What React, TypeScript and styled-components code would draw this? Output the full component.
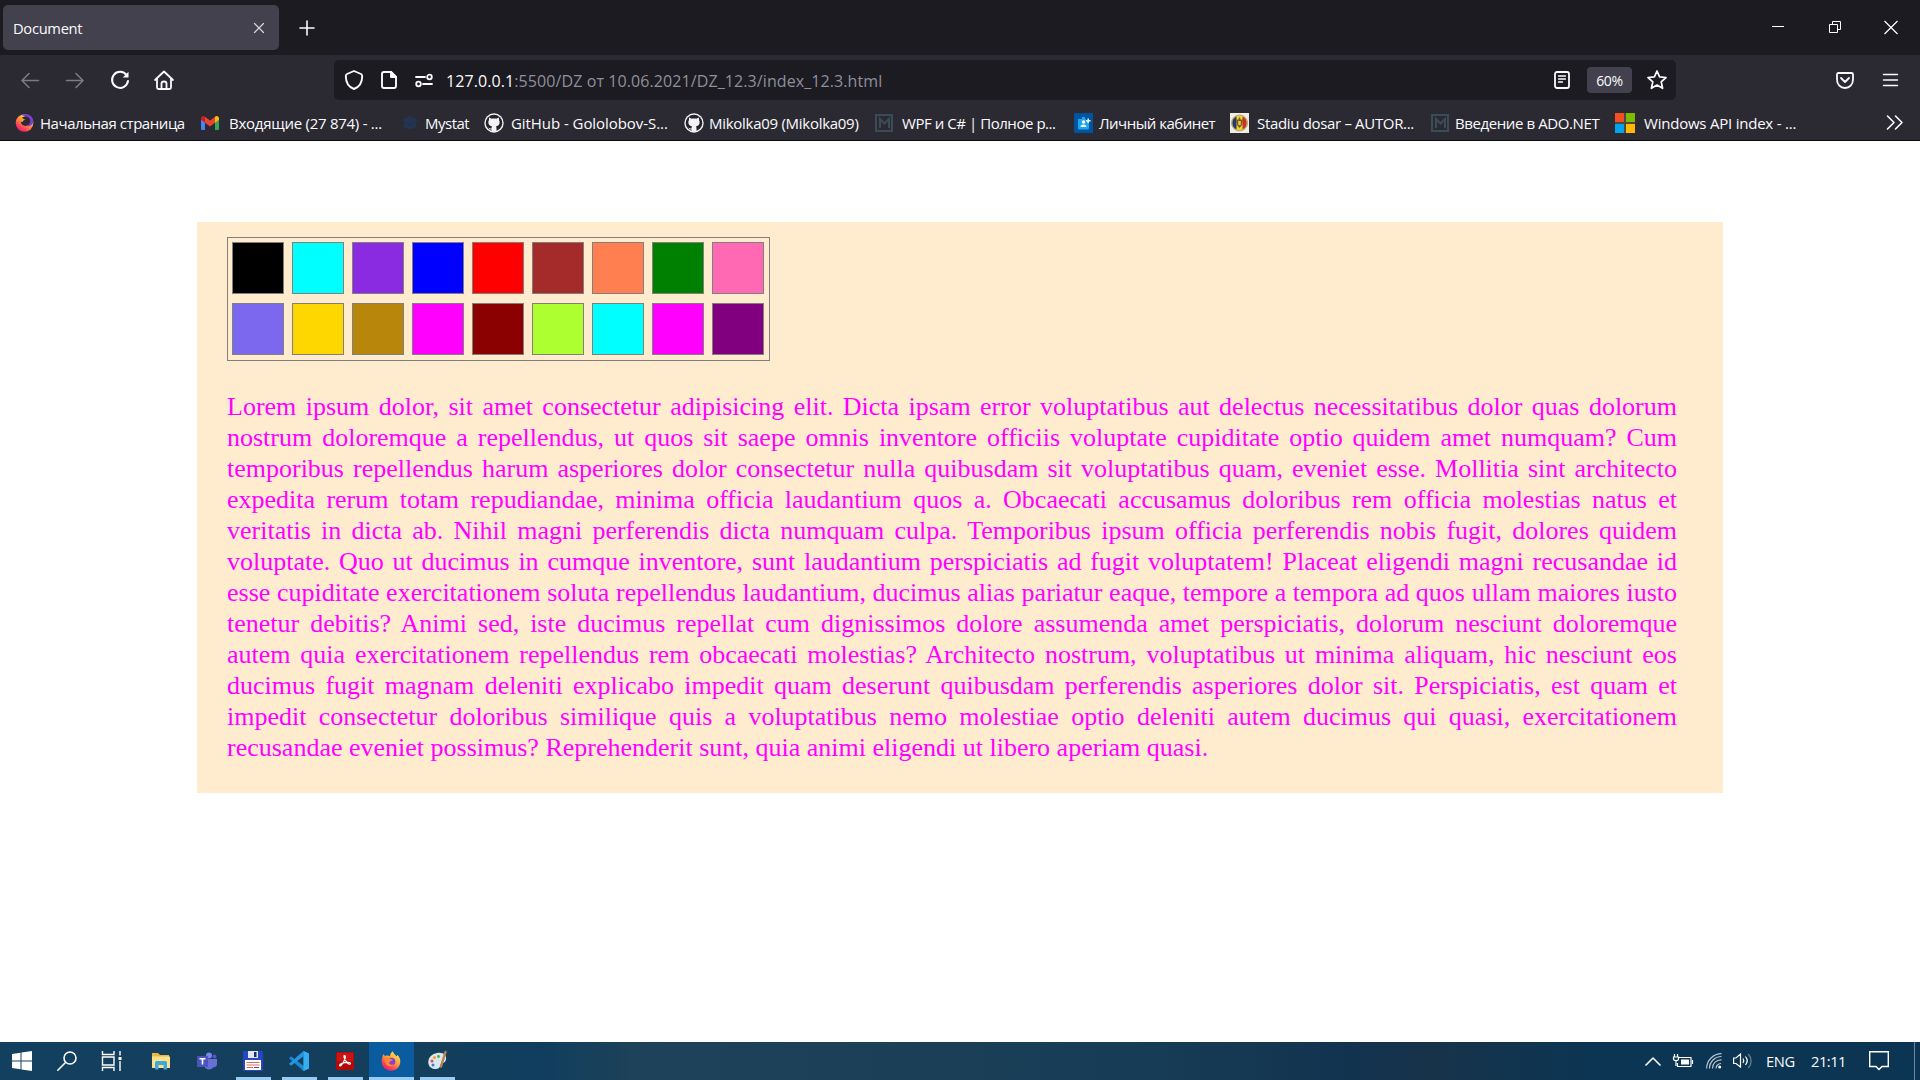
import React from "react";
import styled, { createGlobalStyle } from "styled-components";

const Global = createGlobalStyle`
  * { box-sizing: border-box; }
  body { margin: 0; background: #fff; overflow: hidden; }
  svg { display: block; flex: none; }
`;

const Screen = styled.div`
  width: 1920px;
  height: 1080px;
  display: flex;
  flex-direction: column;
  font-family: "Open Sans", "Noto Sans", sans-serif;
  font-size: 15px;
  color: #fbfbfe;
`;

const Icon = styled.svg<{ $ml?: number; $mt?: number }>`
  margin-left: ${(p) => p.$ml ?? 0}px;
  margin-top: ${(p) => p.$mt ?? 0}px;
  overflow: visible;
`;

const Label = styled.span<{ $ls?: number; $size?: number; $ml?: number; $w?: number }>`
  flex: none;
  white-space: pre;
  font-size: ${(p) => p.$size ?? 15}px;
  letter-spacing: ${(p) => p.$ls ?? 0}px;
  margin-left: ${(p) => p.$ml ?? 0}px;
  width: ${(p) => (p.$w ? p.$w + "px" : "auto")};
`;

const TabBar = styled.header`
  height: 55px;
  flex: none;
  background: #1c1b22;
  display: flex;
  align-items: center;
`;

const Tab = styled.div`
  width: 276px;
  height: 45px;
  margin-left: 3px;
  padding: 0 14px 0 10px;
  border-radius: 5px;
  background: #42414d;
  display: flex;
  align-items: center;
  justify-content: space-between;
  ${Label} { padding-top: 1px; }
`;

const WindowButtons = styled.div`
  margin-left: auto;
  display: flex;
  align-items: center;
  gap: 44px;
  padding-right: 22px;
`;

const Toolbar = styled.div`
  height: 50px;
  flex: none;
  background: #2b2a33;
  display: flex;
  align-items: center;
`;

const NavButtons = styled.nav`
  width: 334px;
  padding-left: 20px;
  display: flex;
  align-items: center;
  gap: 25px;
`;

const UrlBar = styled.div`
  width: 1342px;
  height: 40px;
  border-radius: 5px;
  background: #1c1b22;
  display: flex;
  align-items: center;
`;

const Url = styled.span`
  margin-left: 13px;
  padding-top: 2px;
  font-size: 16px;
  letter-spacing: 0.09px;
  white-space: pre;
  color: #8f8f9a;
  b { font-weight: 400; color: #fbfbfe; }
`;

const Zoom = styled.div`
  width: 45px;
  height: 26px;
  margin-left: 17px;
  border-radius: 4px;
  background: #42414d;
  font-size: 14px;
  letter-spacing: -0.3px;
  padding-top: 1px;
  display: flex;
  align-items: center;
  justify-content: center;
`;

const UrlActions = styled.div`
  margin-left: auto;
  display: flex;
  align-items: center;
  padding-right: 9px;
`;

const Menu = styled.div`
  margin-left: auto;
  padding-right: 22px;
  display: flex;
  align-items: center;
  gap: 29px;
`;

const Bookmarks = styled.div`
  height: 36px;
  flex: none;
  background: #2b2a33;
  border-bottom: 1px solid #0c0c0d;
  display: flex;
  align-items: center;
  padding: 0 16px 0 15px;
  justify-content: space-between;
`;

const BookmarkList = styled.div`
  display: flex;
  align-items: center;
`;

const Bookmark = styled.div<{ $w: number; $gap: number }>`
  width: ${(p) => p.$w}px;
  height: 24px;
  display: flex;
  align-items: center;
  gap: ${(p) => p.$gap}px;
  flex: none;
`;

const Page = styled.main`
  flex: 1;
  background: #fff;
  padding: 81px 197px 0;
`;

const Article = styled.section`
  width: 1526px;
  height: 571px;
  background: #ffebcd;
  padding: 15px 46px 30px 30px;
`;

const Palette = styled.div`
  width: 543px;
  height: 124px;
  border: 1px solid #808080;
  padding: 4px;
  display: grid;
  grid-template-columns: repeat(9, 52px);
  grid-auto-rows: 52px;
  gap: 9px 8px;
`;

const Swatch = styled.div<{ $color: string }>`
  border: 1px solid #808080;
  background: ${(p) => p.$color};
`;

const Text = styled.p`
  margin: 30px 0 0;
  font-family: "Liberation Serif", "Times New Roman", serif;
  font-size: 26px;
  line-height: 31px;
  color: #ff00ff;
  text-align: justify;
`;

const Taskbar = styled.footer`
  height: 38px;
  flex: none;
  background: linear-gradient(90deg, #14405f 0, #133e5c 440px, #103d5e 540px, #1d4259 630px, #1b4057 850px, #173c56 1150px, #12334f 1350px, #17334a 1430px, #0b3553 1600px, #0b3552 1920px);
  display: flex;
  justify-content: space-between;
`;

const Apps = styled.div`
  display: flex;
`;

const TaskButton = styled.div<{ $w?: number; $active?: boolean; $open?: boolean }>`
  width: ${(p) => p.$w ?? 46}px;
  height: 38px;
  margin-right: ${(p) => (p.$active ? 1 : 0)}px;
  display: flex;
  align-items: center;
  justify-content: center;
  background: ${(p) => (p.$active ? "#0b5c9e" : "transparent")};
  background-image: ${(p) =>
    p.$open || p.$active ? "linear-gradient(#9acbf3, #9acbf3)" : "none"};
  background-repeat: no-repeat;
  background-position: ${(p) => (p.$active ? 0 : 5)}px bottom;
  background-size: ${(p) => (p.$active ? "45px" : "35px")} 3px;
`;

const Tray = styled.div`
  display: flex;
  align-items: center;
  width: 275px;
`;

const ShowDesktop = styled.div`
  margin-left: auto;
  width: 6px;
  height: 38px;
  border-left: 1px solid #6d8798;
`;

const Firefox = ({ size = 20, home = false, ml = 0 }: { size?: number; home?: boolean; ml?: number }) => (
  <Icon $ml={ml} width={size} height={size} viewBox="0 0 20 20">
    <defs>
      <linearGradient id="ffBody" x1="0.8" y1="0.1" x2="0.25" y2="0.95">
        <stop offset="0" stopColor="#ffe14a" />
        <stop offset="0.45" stopColor="#ff9640" />
        <stop offset="0.8" stopColor="#ff3d57" />
        <stop offset="1" stopColor="#e3207d" />
      </linearGradient>
    </defs>
    {home ? (
      <>
        <circle cx="10" cy="10.5" r="9.3" fill="url(#ffBody)" />
        <path d="M7 2.2C11-.7 19.5 1.500 19.300 10C17.500 13.500 15 14 12.500 14.200C16 11 15 4.500 7 2.200Z" fill="#7a3fd0" />
        <circle cx="11" cy="8.600" r="5" fill="#2b2a33" />
        <path d="M5.500 6C7 4.700 8.500 5 9 6.200L11 7C9 7.500 8.500 8 8 9.500L5.500 9Z" fill="#ff9d3c" />
      </>
    ) : (
      <>
        <path d="M2.500 3C3 4.200 3.600 4.700 4.500 5C6 4.200 7.800 4.500 9 5.500C9 3.300 10 1.400 12 .3C12.300 2.500 14 3.500 15.500 5.200L16.500 4C18.500 6 19.500 8.500 19.300 11C19 16 15 19.700 10 19.700C5 19.700 .7 16 .7 10.800C.7 7.500 1.500 5 2.500 3Z" fill="url(#ffBody)" />
        <circle cx="10.500" cy="10.500" r="3.800" fill="#7b45d6" />
        <path d="M3.500 7.500C5.500 6 8 6.500 9.300 8L12 8.500C11 10 9.500 9.500 8.500 11C7.500 12.500 9.500 14.500 12.500 13.300C10 17 4.500 15 4.500 11Z" fill="#ff8a2e" />
      </>
    )}
  </Icon>
);

const Gmail = () => (
  <Icon width="18" height="14" viewBox="0 0 18 14">
    <path d="M0 2V12.700C0 13.400.6 14 1.300 14H4V6Z" fill="#4285f4" />
    <path d="M18 2V12.700C18 13.400 17.400 14 16.700 14H14V6Z" fill="#34a853" />
    <path d="M0 2.500C0 .2 2.300-.6 4 .7V6.700L0 3.700Z" fill="#c5221f" />
    <path d="M18 2.500C18 .2 15.700-.6 14 .7V6.700L18 3.700Z" fill="#fbbc04" />
    <path d="M4 .7L9 4.500L14 .7V6.700L9 10.500L4 6.700Z" fill="#ea4335" />
  </Icon>
);

const Mystat = () => (
  <Icon width="18" height="16" viewBox="0 0 18 16">
    <path d="M9 1L18 5L9 10L0 5ZM3 7L9 10.500L15 7V12C12 15 6 15 3 12Z" fill="#22344f" />
  </Icon>
);

const GitHub = () => (
  <Icon width="20" height="20" viewBox="0 0 20 20">
    <circle cx="10" cy="10" r="9.700" fill="#f4f4f6" />
    <circle cx="10" cy="10" r="8.300" fill="#24232b" />
    <path d="M5.200 4.500L7.700 5.700C9 5.300 11 5.300 12.300 5.700L14.800 4.500C15.200 5.500 15.100 6.400 14.900 7C16.500 9 15.600 13 11.900 13.400C12.400 14 12.500 14.700 12.500 15.500V18.500H7.500V16.500C5.500 16.800 5 15.500 4.300 14.700C5.700 14.500 5.800 16 7.500 15.500C7.500 14.500 7.700 13.900 8.100 13.400C4.400 13 3.500 9 5.100 7C4.900 6.400 4.800 5.500 5.200 4.500Z" fill="#f4f4f6" />
  </Icon>
);

const Metanit = () => (
  <Icon width="18" height="18" viewBox="0 0 18 18" fill="none" stroke="#3d4b59">
    <rect x="1" y="1" width="16" height="16" strokeWidth="2" />
    <path d="M5 14V5L9.500 9.500L14 5V14" strokeWidth="2" />
  </Icon>
);

const Cabinet = () => (
  <Icon width="19" height="20" viewBox="0 0 19 20">
    <rect width="19" height="20" fill="#00539f" />
    <path d="M4 6H8V4H11V6H12V8H15V15C15 16 14.500 16.500 13.500 16.500H5.500C4.500 16.500 4 16 4 15Z" fill="#19a7f0" />
    <circle cx="9.500" cy="9" r="1.700" fill="#fff" />
    <path d="M6.500 14C7 10.800 12 10.800 12.500 14ZM13.500 5.500H15V7H16.500V8.500H15V10H13.500V8.500H12V7H13.500Z" fill="#fff" />
  </Icon>
);

const Stadiu = () => (
  <Icon width="19" height="20" viewBox="0 0 19 20">
    <rect width="19" height="20" fill="#f1efe4" />
    <circle cx="9.500" cy="10" r="8" fill="#e8cf34" stroke="#aaa48a" />
    <path d="M6.500 3.500A7.200 7.200 0 0 0 6.500 16.500Z" fill="#29366e" />
    <path d="M12.500 3.500A7.200 7.200 0 0 1 12.500 16.500Z" fill="#c8312e" />
    <path d="M9.500 4L11 7L13 6L12 12L9.500 15L7 12L6 6L8 7Z" fill="#7c5b21" />
    <rect x="8.300" y="8" width="2.500" height="4" fill="#e8cf34" />
  </Icon>
);

const Microsoft = () => (
  <Icon width="20" height="20" viewBox="0 0 20 20">
    <rect width="20" height="20" fill="#4b4a3c" />
    <rect width="9" height="9" fill="#f25022" />
    <rect x="11" width="9" height="9" fill="#7fba00" />
    <rect y="11" width="9" height="9" fill="#00a4ef" />
    <rect x="11" y="11" width="9" height="9" fill="#ffb900" />
  </Icon>
);

const BOOKMARKS = [
  { icon: <Firefox size={19} home />, text: "Начальная страница", w: 186, gap: 6, ls: -0.45 },
  { icon: <Gmail />, text: "Входящие (27 874) - ...", w: 200, gap: 10, ls: -0.26 },
  { icon: <Mystat />, text: "Mystat", w: 83, gap: 6, ls: -0.5 },
  { icon: <GitHub />, text: "GitHub - Gololobov-S...", w: 200, gap: 7, ls: -0.06 },
  { icon: <GitHub />, text: "Mikolka09 (Mikolka09)", w: 191, gap: 5, ls: -0.28 },
  { icon: <Metanit />, text: "WPF и C# | Полное р...", w: 199, gap: 9, ls: -0.45 },
  { icon: <Cabinet />, text: "Личный кабинет", w: 156, gap: 6, ls: -0.5 },
  { icon: <Stadiu />, text: "Stadiu dosar – AUTOR...", w: 201, gap: 8, ls: -0.33 },
  { icon: <Metanit />, text: "Введение в ADO.NET", w: 184, gap: 6, ls: -0.4 },
  { icon: <Microsoft />, text: "Windows API index - ...", w: 200, gap: 9, ls: -0.22 },
];

const COLORS = [
  "black", "aqua", "blueviolet", "blue", "red", "brown", "coral", "green", "hotpink",
  "mediumslateblue", "gold", "darkgoldenrod", "magenta", "darkred", "greenyellow", "cyan", "fuchsia", "purple",
];

const LOREM =
  "Lorem ipsum dolor, sit amet consectetur adipisicing elit. Dicta ipsam error voluptatibus aut delectus necessitatibus dolor quas dolorum nostrum doloremque a repellendus, ut quos sit saepe omnis inventore officiis voluptate cupiditate optio quidem amet numquam? Cum temporibus repellendus harum asperiores dolor consectetur nulla quibusdam sit voluptatibus quam, eveniet esse. Mollitia sint architecto expedita rerum totam repudiandae, minima officia laudantium quos a. Obcaecati accusamus doloribus rem officia molestias natus et veritatis in dicta ab. Nihil magni perferendis dicta numquam culpa. Temporibus ipsum officia perferendis nobis fugit, dolores quidem voluptate. Quo ut ducimus in cumque inventore, sunt laudantium perspiciatis ad fugit voluptatem! Placeat eligendi magni recusandae id esse cupiditate exercitationem soluta repellendus laudantium, ducimus alias pariatur eaque, tempore a tempora ad quos ullam maiores iusto tenetur debitis? Animi sed, iste ducimus repellat cum dignissimos dolore assumenda amet perspiciatis, dolorum nesciunt doloremque autem quia exercitationem repellendus rem obcaecati molestias? Architecto nostrum, voluptatibus ut minima aliquam, hic nesciunt eos ducimus fugit magnam deleniti explicabo impedit quam deserunt quibusdam perferendis asperiores dolor sit. Perspiciatis, est quam et impedit consectetur doloribus similique quis a voluptatibus nemo molestiae optio deleniti autem ducimus qui quasi, exercitationem recusandae eveniet possimus? Reprehenderit sunt, quia animi eligendi ut libero aperiam quasi.";

const line = { fill: "none", stroke: "#fbfbfe", strokeWidth: 1.6, strokeLinecap: "round", strokeLinejoin: "round" } as const;

export default function App() {
  return (
    <Screen>
      <Global />
      <TabBar>
        <Tab>
          <Label $size={14.7} $ls={-0.3}>Document</Label>
          <Icon width="12" height="12" viewBox="0 0 12 12" {...line} strokeWidth={1.200} stroke="#d6d6dc">
            <path d="M1.500 1.500L10.500 10.500M10.500 1.500L1.500 10.500" />
          </Icon>
        </Tab>
        <Icon $ml={20} width="16" height="16" viewBox="0 0 16 16" {...line}>
          <path d="M8 1V15M1 8H15" />
        </Icon>
        <WindowButtons>
          <Icon width="13" height="13" stroke="#fff"><path d="M1 5.500H13" /></Icon>
          <Icon width="13" height="13" fill="none" stroke="#fff">
            <path d="M1.500 3.500H9.500V11.500H1.500ZM4.500 3.500V.5H12.500V8.500H9.500" />
          </Icon>
          <Icon $ml={-1} width="14" height="14" stroke="#fff" strokeWidth="1.200"><path d="M.5 0L13.500 13M13.500 0L.5 13" /></Icon>
        </WindowButtons>
      </TabBar>

      <Toolbar>
        <NavButtons>
          <Icon width="20" height="20" {...line} stroke="#7c7b84"><path d="M18.500 10.500H2M9 3.500L2 10.500L9 17.500" /></Icon>
          <Icon width="20" height="20" {...line} stroke="#7c7b84"><path d="M1.500 10.500H18M11 3.500L18 10.500L11 17.500" /></Icon>
          <Icon width="20" height="20" {...line} strokeWidth={2}>
            <path d="M16.600 5.200A8 8 0 1 0 18 11" />
            <path d="M18.500 1.800V7.500H12.800Z" fill="#fbfbfe" stroke="none" />
          </Icon>
          <Icon $ml={-1} width="20" height="20" {...line} strokeWidth={1.800}>
            <path d="M1 10L10 1.500L19 10M3 8.500V17.500C3 18.500 3.500 19 4.500 19H15.500C16.500 19 17 18.500 17 17.500V8.500M7.500 18.500V13.500C7.500 12 8.500 11.500 10 11.500S12.500 12 12.500 13.500V18.500" />
          </Icon>
        </NavButtons>
        <UrlBar>
          <Icon $ml={11} width="18" height="20" {...line} strokeWidth={1.900}>
            <path d="M9 1L16 4C17 4.500 17.200 5 17.200 6C17.200 12 14.500 17 9 19C3.500 17 .8 12 .8 6C.8 5 1 4.500 2 4Z" />
          </Icon>
          <Icon $ml={18} width="16" height="18" {...line} strokeWidth={1.900}>
            <path d="M3 1H10L15 6V15C15 16.500 14.500 17 13 17H3C1.500 17 1 16.500 1 15V3C1 1.500 1.500 1 3 1Z" />
            <path d="M10 1V6H15Z" fill="#fbfbfe" />
          </Icon>
          <Icon $ml={18} width="18" height="13" {...line} strokeWidth={1.800}>
            <path d="M1 3H10M8 10H17" />
            <circle cx="14.500" cy="3" r="2.300" /><circle cx="3.500" cy="10" r="2.300" />
          </Icon>
          <Url><b>127.0.0.1</b>:5500/DZ от 10.06.2021/DZ_12.3/index_12.3.html</Url>
          <UrlActions>
            <Icon width="16" height="18" {...line} strokeWidth={1.800}>
              <rect x="1" y="1" width="14" height="16" rx="2" />
              <path d="M4.500 5H11.500M4.500 8H11.500M4.500 11H8.500" strokeWidth="1.300" />
            </Icon>
            <Zoom>60%</Zoom>
            <Icon $ml={15} width="20" height="20" {...line} strokeWidth={1.700}>
              <path d="M10 1L12.600 6.800L19 7.500L14.200 11.800L15.600 18.300L10 15L4.400 18.300L5.800 11.800L1 7.500L7.400 6.800Z" />
            </Icon>
          </UrlActions>
        </UrlBar>
        <Menu>
          <Icon width="18" height="17" {...line} strokeWidth={1.800}>
            <path d="M2.500 1H15.500C16.500 1 17 1.500 17 2.500V7.500C17 12.500 13.500 16 9 16S1 12.500 1 7.500V2.500C1 1.500 1.500 1 2.500 1ZM5 6L9 10L13 6" />
          </Icon>
          <Icon width="15" height="13" {...line} strokeWidth={1.400}><path d="M.5 .5H14.500M.5 6H14.500M.5 11.500H14.500" /></Icon>
        </Menu>
      </Toolbar>

      <Bookmarks>
        <BookmarkList>
          {BOOKMARKS.map((b) => (
            <Bookmark key={b.text} $w={b.w} $gap={b.gap}>
              {b.icon}
              <Label $ls={b.ls}>{b.text}</Label>
            </Bookmark>
          ))}
        </BookmarkList>
        <Icon width="18" height="15" {...line}><path d="M1.500 1L8 7.500L1.500 14M9.500 1L16 7.500L9.500 14" /></Icon>
      </Bookmarks>

      <Page>
        <Article>
          <Palette>{COLORS.map((c) => <Swatch key={c} $color={c} />)}</Palette>
          <Text>{LOREM}</Text>
        </Article>
      </Page>

      <Taskbar>
        <Apps>
          <TaskButton $w={44}>
            <Icon width="20" height="20" fill="#fff">
              <path d="M0 3L8.500 1.800V9.500H0ZM9.500 1.600L20 0V9.500H9.500ZM0 10.500H8.500V18.200L0 17ZM9.500 10.500H20V20L9.500 18.400Z" />
            </Icon>
          </TaskButton>
          <TaskButton>
            <Icon width="20" height="20" {...line}><circle cx="13" cy="7" r="6" /><path d="M8.500 11.500L.8 19.200" /></Icon>
          </TaskButton>
          <TaskButton $w={49}>
            <Icon $ml={-6} width="21" height="20" fill="none" stroke="#fff" strokeWidth="1.400">
              <path d="M1.500 0V3.500H13V0M1.500 6H13V14H1.500ZM1.500 20V16.500H13V20M19 0V4.500M19 10V20" />
              <rect x="17.500" y="6" width="3" height="3" fill="#fff" stroke="none" />
            </Icon>
          </TaskButton>
          <TaskButton>
            <Icon $ml={-2} width="18" height="18">
              <path d="M0 1H6L8 3H17V16H0Z" fill="#e9b93f" /><path d="M0 4.500H18V16H0Z" fill="#fde08c" />
              <path d="M3 17.500V11C3 9.500 4 9 5 9H13C14.500 9 15 9.500 15 11V17.500H11.500V13H6.500V17.500Z" fill="#3fa9dc" />
            </Icon>
          </TaskButton>
          <TaskButton>
            <Icon $ml={-2} width="20" height="18">
              <circle cx="12" cy="3.500" r="3" fill="#7b83eb" /><circle cx="17.500" cy="4.500" r="2" fill="#5059c9" />
              <path d="M7 7H20V12C20 14.500 18 15.500 16.500 15C15 18.500 8 18.500 7 13.500Z" fill="#6870d8" />
              <rect y="4" width="11" height="11" rx="1" fill="#4b53bc" />
              <path d="M2.500 6.700H8.500M5.500 6.700V12.500" stroke="#fff" strokeWidth="1.600" />
            </Icon>
          </TaskButton>
          <TaskButton $open>
            <Icon $ml={-2} width="20" height="20">
              <path d="M0 0H19L20 1V20H0Z" fill="#2645c4" />
              <rect x="5" width="10" height="7" fill="#dfe6ee" /><rect x="11" y="1" width="2.500" height="5" fill="#1b2d70" />
              <rect x="2" y="9" width="16" height="10" fill="#fff" />
              <path d="M3.500 11.500H16.500M3.500 14H16.500M3.500 16.500H10" stroke="#dc6a62" strokeWidth="1" /><path d="M11 16.500H16" stroke="#555" />
            </Icon>
          </TaskButton>
          <TaskButton $open>
            <Icon $ml={-2} width="20" height="20">
              <path d="M14.500 0L20 2.500V17.500L14.500 20L0 7.300L2 5.300L14.500 14.700Z" fill="#1f86d0" />
              <path d="M14.500 0V5.300L2 14.700L0 12.700Z" fill="#2597e0" />
              <path d="M14.500 0L20 2.500V17.500L14.500 20Z" fill="#39adf2" />
            </Icon>
          </TaskButton>
          <TaskButton $open>
            <Icon $ml={-2} width="18" height="18">
              <rect width="18" height="18" rx="1" fill="#b30b0b" /><rect x="1" y="1" width="16" height="8" fill="#c81616" />
              <path d="M8.700 3.500C10 3.500 9.200 7 7.500 10S3.800 15 3.500 13.500S8 10.500 11 10.300S15 11 14 12S9.500 9.500 8.500 6.500S8 3.500 8.700 3.500Z" fill="none" stroke="#fff" strokeWidth="1.200" />
            </Icon>
          </TaskButton>
          <TaskButton $w={45} $active><Firefox ml={-2} /></TaskButton>
          <TaskButton $open>
            <Icon $ml={-1} width="20" height="20">
              <path d="M9 2C15 .5 19 4 18 8.500C17 13 13 11.500 12.500 14C12.200 16.500 10 18.500 6.500 18C2 17.500 0 14 .3 10.500C.7 6 4 3 9 2Z" fill="#d8e6ee" />
              <circle cx="4" cy="10" r="1.500" fill="#e5493a" /><circle cx="6.500" cy="6.500" r="1.500" fill="#f29b2f" />
              <circle cx="10.500" cy="5.500" r="1.400" fill="#58a83c" /><circle cx="5" cy="14" r="1.500" fill="#2f7fd0" />
              <path d="M17.500 1L13 15.500" stroke="#b9814f" strokeWidth="2.400" strokeLinecap="round" />
            </Icon>
          </TaskButton>
        </Apps>
        <Tray>
          <Icon width="16" height="9" {...line} strokeLinecap="butt"><path d="M.5 8.500L8 1L15.500 8.500" /></Icon>
          <Icon $ml={12} width="20" height="14" fill="none" stroke="#fff" strokeWidth="1.200">
            <path d="M5.500 3.500H18V12.500H4.500V9" /><rect x="8" y="5.500" width="8" height="5" fill="#fff" stroke="none" /><path d="M19.500 6V10M1.500 0V3M4.500 0V3M.5 3H5.500V5C5.500 7 .5 7 .5 5ZM3 6.500V12" />
          </Icon>
          <Icon $ml={13} width="16" height="16" fill="none" stroke="#fff" strokeWidth="1.200">
            <path d="M10 15.500A5 5 0 0 1 15 10.500M6.500 15.500A8.500 8.500 0 0 1 15.500 6.800M3.500 15.500A12 12 0 0 1 15.500 3.500M.6 15.500A15 15 0 0 1 15.500 .6" stroke="#b8c7d1" />
            <circle cx="13.700" cy="14" r="1.500" fill="#fff" stroke="none" />
          </Icon>
          <Icon $ml={11} width="20" height="18" fill="none" stroke="#fff" strokeWidth="1.200">
            <path d="M.6 6H3L7.500 2V15L3 11.500H.6ZM10 6.500C11 8 11 9.500 10 11M12.500 4.500C14.500 7 14.500 10.500 12.500 13" /><path d="M15.300 2C19 6 19 12 15.300 16" stroke="#6e8797" />
          </Icon>
          <Label $ml={13} $w={45} $size={14.700} $ls={-0.4}>ENG</Label>
          <Label $w={58} $size={14.700} $ls={-0.5}>21:11</Label>
          <Icon width="20" height="20" fill="none" stroke="#fff" strokeWidth="1.400"><path d="M.7 .7H19.300V15.500H13L10 18.500L7 15.500H.7Z" /></Icon>
          <ShowDesktop />
        </Tray>
      </Taskbar>
    </Screen>
  );
}
